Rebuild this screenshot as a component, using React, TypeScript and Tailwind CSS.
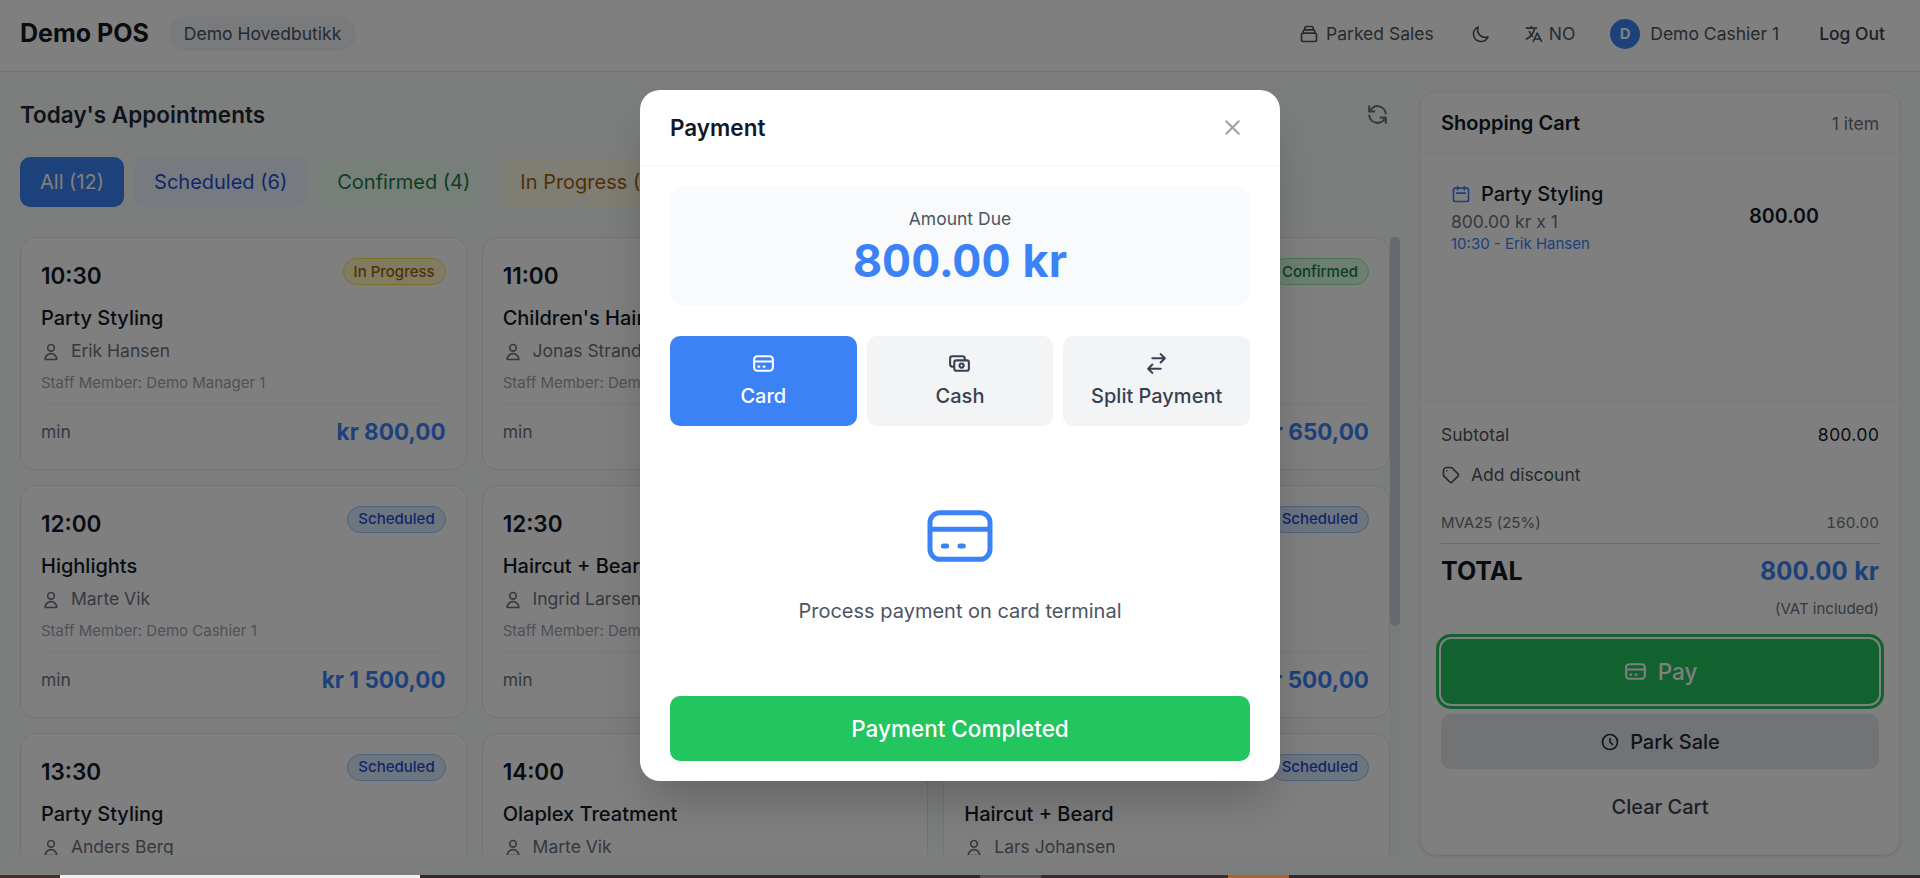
import React from "react";

const ICONS = {
  card: "M3 10h18M7 15h1m4 0h1m-7 4h12a3 3 0 003-3V8a3 3 0 00-3-3H6a3 3 0 00-3 3v8a3 3 0 003 3z",
  cash: "M17 9V7a2 2 0 00-2-2H5a2 2 0 00-2 2v6a2 2 0 002 2h2m2 4h10a2 2 0 002-2v-6a2 2 0 00-2-2H9a2 2 0 00-2 2v6a2 2 0 002 2zm7-5a2 2 0 11-4 0 2 2 0 014 0z",
  split: "M8 7h12m0 0l-4-4m4 4l-4 4m0 6H4m0 0l4 4m-4-4l4-4",
  user: "M16 7a4 4 0 11-8 0 4 4 0 018 0zM12 14a7 7 0 00-7 7h14a7 7 0 00-7-7z",
  stack:
    "M19 11H5m14 0a2 2 0 012 2v6a2 2 0 01-2 2H5a2 2 0 01-2-2v-6a2 2 0 012-2m14 0V9a2 2 0 00-2-2M5 11V9a2 2 0 012-2m0 0V5a2 2 0 012-2h6a2 2 0 012 2v2M7 7h10",
  moon: "M20.354 15.354A9 9 0 018.646 3.646 9.003 9.003 0 0012 21a9.003 9.003 0 008.354-5.646z",
  translate:
    "M3 5h12M9 3v2m1.048 9.5A18.022 18.022 0 016.412 9m6.088 9h7M11 21l5-10 5 10M12.751 5C11.783 10.77 8.07 15.61 3 18.129",
  refresh:
    "M4 4v5h.582m15.356 2A8.001 8.001 0 004.582 9m0 0H9m11 11v-5h-.581m0 0a8.003 8.003 0 01-15.357-2m15.357 2H15",
  calendar: "M8 7V3m8 4V3m-9 8h10M5 21h14a2 2 0 002-2V7a2 2 0 00-2-2H5a2 2 0 00-2 2v12a2 2 0 002 2z",
  tag: "M7 7h.01M7 3h5c.512 0 1.024.195 1.414.586l7 7a2 2 0 010 2.828l-7 7a2 2 0 01-2.828 0l-7-7A1.994 1.994 0 013 12V7a4 4 0 014-4z",
  clock: "M12 8v4l3 3m6-3a9 9 0 11-18 0 9 9 0 0118 0z",
  close: "M6 18L18 6M6 6l12 12",
};

function Icon({
  name,
  className = "size-4",
  stroke = 2,
}: {
  name: keyof typeof ICONS;
  className?: string;
  stroke?: number;
}) {
  return (
    <svg
      className={className}
      viewBox="0 0 24 24"
      fill="none"
      stroke="currentColor"
      strokeWidth={stroke}
      strokeLinecap="round"
      strokeLinejoin="round"
      aria-hidden="true"
    >
      <path d={ICONS[name]} />
    </svg>
  );
}

type Status = "Scheduled" | "Confirmed" | "In Progress";

const STATUS_STYLE: Record<Status, string> = {
  Scheduled: "border-[#93c5fd] bg-[#dbeafe] text-[#1d4ed8]",
  Confirmed: "border-[#86efac] bg-[#dcfce7] text-[#15803d]",
  "In Progress": "border-[#fde047] bg-[#fef9c3] text-[#a16207]",
};

interface Appointment {
  time: string;
  status: Status;
  service: string;
  customer: string;
  staff: string;
  price: string;
}

const APPOINTMENTS: Appointment[] = [
  { time: "10:30", status: "In Progress", service: "Party Styling", customer: "Erik Hansen", staff: "Demo Manager 1", price: "kr 800,00" },
  { time: "11:00", status: "Confirmed", service: "Children's Haircut", customer: "Jonas Strand", staff: "Demo Cashier 1", price: "kr 350,00" },
  { time: "11:30", status: "Confirmed", service: "Haircut", customer: "Nora Lie", staff: "Demo Manager 1", price: "kr 650,00" },
  { time: "12:00", status: "Scheduled", service: "Highlights", customer: "Marte Vik", staff: "Demo Cashier 1", price: "kr 1 500,00" },
  { time: "12:30", status: "Scheduled", service: "Haircut + Beard", customer: "Ingrid Larsen", staff: "Demo Manager 1", price: "kr 550,00" },
  { time: "13:00", status: "Scheduled", service: "Haircut", customer: "Kari Dahl", staff: "Demo Cashier 1", price: "kr 500,00" },
  { time: "13:30", status: "Scheduled", service: "Party Styling", customer: "Anders Berg", staff: "Demo Manager 1", price: "kr 800,00" },
  { time: "14:00", status: "Confirmed", service: "Olaplex Treatment", customer: "Marte Vik", staff: "Demo Cashier 1", price: "kr 450,00" },
  { time: "14:30", status: "Scheduled", service: "Haircut + Beard", customer: "Lars Johansen", staff: "Demo Manager 1", price: "kr 550,00" },
];

const FILTERS = [
  { label: "All (12)", style: "bg-[#3b82f6] text-white" },
  { label: "Scheduled (6)", style: "bg-[#eff6ff] text-[#1d4ed8]" },
  { label: "Confirmed (4)", style: "bg-[#f0fdf4] text-[#15803d]" },
  { label: "In Progress (2)", style: "bg-[#fefce8] text-[#a16207]" },
];

function Header() {
  return (
    <header className="flex items-center justify-between border-b border-[#e5e7eb] bg-white px-4 pt-[11px] pb-[15px]">
      <div className="flex items-center gap-4">
        <h1 className="text-xl font-bold text-[#111827]">Demo POS</h1>
        <span className="rounded-full bg-[#f3f4f6] px-3 py-1 text-sm text-[#4b5563]">Demo Hovedbutikk</span>
      </div>
      <nav className="flex items-center gap-2 text-sm text-[#4b5563]">
        <button className="flex h-9 items-center gap-[7px] px-3">
          <Icon name="stack" />
          Parked Sales
        </button>
        <button aria-label="Dark mode" className="flex size-9 items-center justify-center">
          <Icon name="moon" />
        </button>
        <button className="flex h-9 items-center gap-1 px-2">
          <Icon name="translate" />
          NO
        </button>
        <div className="flex items-center gap-2 px-3">
          <span className="flex size-6 items-center justify-center rounded-full bg-[#3b82f6] text-xs font-bold text-white">
            D
          </span>
          <span>Demo Cashier 1</span>
        </div>
        <button className="h-9 px-3 font-medium text-[#374151]">Log Out</button>
      </nav>
    </header>
  );
}

function AppointmentCard({ item }: { item: Appointment }) {
  return (
    <article className="rounded-xl border border-[#e5e7eb] bg-white p-4">
      <div className="mb-2 flex items-start justify-between">
        <span className="text-lg font-semibold text-[#111827]">{item.time}</span>
        <span className={`rounded-full border px-2 py-0.5 text-xs font-medium ${STATUS_STYLE[item.status]}`}>
          {item.status}
        </span>
      </div>
      <h3 className="mb-1 text-base font-medium text-[#111827]">{item.service}</h3>
      <p className="mb-2 text-sm text-[#6b7280]">
        <Icon name="user" className="mr-1 inline size-4" /> {item.customer}
      </p>
      <p className="text-xs text-[#9ca3af]">Staff Member: {item.staff}</p>
      <div className="mt-2 flex items-center justify-between border-t border-[#f3f4f6] pt-2">
        <span className="text-sm text-[#6b7280]">min</span>
        <span className="text-lg font-bold text-[#3b82f6]">{item.price}</span>
      </div>
    </article>
  );
}

function Appointments() {
  return (
    <section className="flex min-w-0 flex-1 flex-col">
      <div className="mb-4 flex items-center justify-between">
        <h2 className="text-lg font-semibold text-[#1f2937]">Today's Appointments</h2>
        <button aria-label="Refresh" className="p-2 text-[#6b7280]">
          <Icon name="refresh" className="size-5" />
        </button>
      </div>
      <div className="mb-6 flex gap-2">
        {FILTERS.map((f) => (
          <button key={f.label} className={`rounded-lg px-4 py-2 text-base ${f.style}`}>
            {f.label}
          </button>
        ))}
      </div>
      <div className="flex min-h-0 flex-1">
        <div className="grid flex-1 auto-rows-max grid-cols-3 gap-3 overflow-hidden">
          {APPOINTMENTS.map((item) => (
            <AppointmentCard key={item.time} item={item} />
          ))}
        </div>
        <div className="w-2 bg-[#f1f5f9]">
          <div className="h-[63%] rounded-full bg-[#cbd5e1]" />
        </div>
      </div>
    </section>
  );
}

function Cart() {
  return (
    <aside className="flex w-96 flex-col rounded-xl border border-[#f3f4f6] bg-white shadow-sm">
      <div className="flex items-center justify-between border-b border-[#f3f4f6] px-4 py-3">
        <h2 className="text-base font-semibold text-[#111827]">Shopping Cart</h2>
        <span className="text-sm text-[#6b7280]">1 item</span>
      </div>
      <div className="flex-1 px-4 py-3">
        <div className="flex items-center p-2 pr-[60px]">
          <div className="flex-1">
            <div className="flex items-center gap-2">
              <Icon name="calendar" className="size-4 text-[#3b82f6]" />
              <span className="text-base font-medium text-[#111827]">Party Styling</span>
            </div>
            <p className="text-sm text-[#6b7280]">800.00 kr x 1</p>
            <p className="text-xs text-[#3b82f6]">10:30 - Erik Hansen</p>
          </div>
          <span className="text-base font-semibold text-[#111827] tabular-nums">800.00</span>
        </div>
      </div>
      <div className="border-t border-[#f3f4f6] p-4">
        <div className="flex justify-between text-sm">
          <span className="text-[#4b5563]">Subtotal</span>
          <span className="text-[#111827] tabular-nums">800.00</span>
        </div>
        <button className="my-1 flex items-center gap-2 py-2 text-sm text-[#4b5563]">
          <Icon name="tag" />
          Add discount
        </button>
        <div className="flex justify-between border-t border-[#f9fafb] py-2 text-xs text-[#6b7280]">
          <span>MVA25 (25%)</span>
          <span className="tabular-nums">160.00</span>
        </div>
        <div className="flex justify-between border-t border-[#d1d5db] pt-2 text-xl font-bold">
          <span className="text-[#111827]">TOTAL</span>
          <span className="text-[#3b82f6] tabular-nums">800.00 kr</span>
        </div>
        <p className="mt-2 text-right text-xs text-[#6b7280]">(VAT included)</p>
        <div className="mt-4 flex flex-col gap-2">
          <button className="flex items-center justify-center gap-2 rounded-lg bg-[#22c55e] py-3 text-lg font-medium text-white ring-[3px] ring-[#22c55e] ring-offset-2">
            <Icon name="card" className="size-5" />
            Pay
          </button>
          <button className="flex h-11 items-center justify-center gap-2 rounded-lg bg-[#e5e7eb] text-base font-medium text-[#1f2937]">
            <Icon name="clock" />
            Park Sale
          </button>
          <button className="h-11 text-base font-medium text-[#374151]">Clear Cart</button>
        </div>
      </div>
    </aside>
  );
}

const METHODS = [
  { icon: "card", label: "Card", style: "bg-[#3b82f6] text-white" },
  { icon: "cash", label: "Cash", style: "bg-[#f3f4f6] text-[#374151]" },
  { icon: "split", label: "Split Payment", style: "bg-[#f3f4f6] text-[#374151]" },
] as const;

function PaymentDialog() {
  return (
    <div className="absolute inset-0 flex items-center justify-center bg-black/50 pb-[4px]">
      <div
        role="dialog"
        aria-modal="true"
        aria-labelledby="payment-title"
        className="w-full max-w-lg rounded-2xl bg-white shadow-2xl"
      >
        <div className="flex items-center justify-between border-b border-[#f3f4f6] px-6 py-4">
          <h2 id="payment-title" className="text-lg font-semibold text-[#111827]">
            Payment
          </h2>
          <button aria-label="Close" className="p-1 text-[#9ca3af]">
            <Icon name="close" className="size-5" />
          </button>
        </div>
        <div className="px-6 py-4">
          <div className="mb-6 rounded-xl bg-[#f9fafb] p-4 text-center">
            <p className="mb-1 text-sm text-[#4b5563]">Amount Due</p>
            <p className="text-4xl font-bold text-[#3b82f6] tabular-nums">800.00 kr</p>
          </div>
          <div className="grid grid-cols-3 gap-2">
            {METHODS.map((m) => (
              <button
                key={m.label}
                className={`flex flex-col items-center gap-1 rounded-lg p-3 text-base font-medium ${m.style}`}
              >
                <Icon name={m.icon} className="size-5" />
                {m.label}
              </button>
            ))}
          </div>
          <div className="my-6 flex flex-col items-center gap-4 py-8">
            <Icon name="card" className="size-16 text-[#3b82f6]" stroke={1.5} />
            <p className="text-base text-[#4b5563]">Process payment on card terminal</p>
          </div>
          <button className="w-full rounded-lg bg-[#22c55e] py-3 text-lg font-medium text-white">
            Payment Completed
          </button>
        </div>
      </div>
    </div>
  );
}

/* Sliver of the desktop that shows under the application window. */
function DesktopEdge() {
  return (
    <div className="flex h-[3px] shrink-0 bg-[#35282b]">
      <div className="w-[60px] bg-[#43302d]" />
      <div className="w-[360px] bg-[#f0f0f0]" />
      <div className="w-[560px] bg-[#33272a]" />
      <div className="w-[61px] bg-[#5c4f50]" />
      <div className="w-[187px] bg-[#3a2b2d]" />
      <div className="w-[61px] bg-[#b0612a]" />
    </div>
  );
}

export default function App() {
  return (
    <div className="flex h-screen flex-col overflow-hidden font-['Inter',sans-serif]">
      <style>{"html { font-size: 20px; }"}</style>
      <div className="relative flex min-h-0 flex-1 flex-col bg-[#f8fcfa]">
        <Header />
        <main className="flex min-h-0 flex-1 gap-4 p-4">
          <Appointments />
          <Cart />
        </main>
        <PaymentDialog />
      </div>
      <DesktopEdge />
    </div>
  );
}
